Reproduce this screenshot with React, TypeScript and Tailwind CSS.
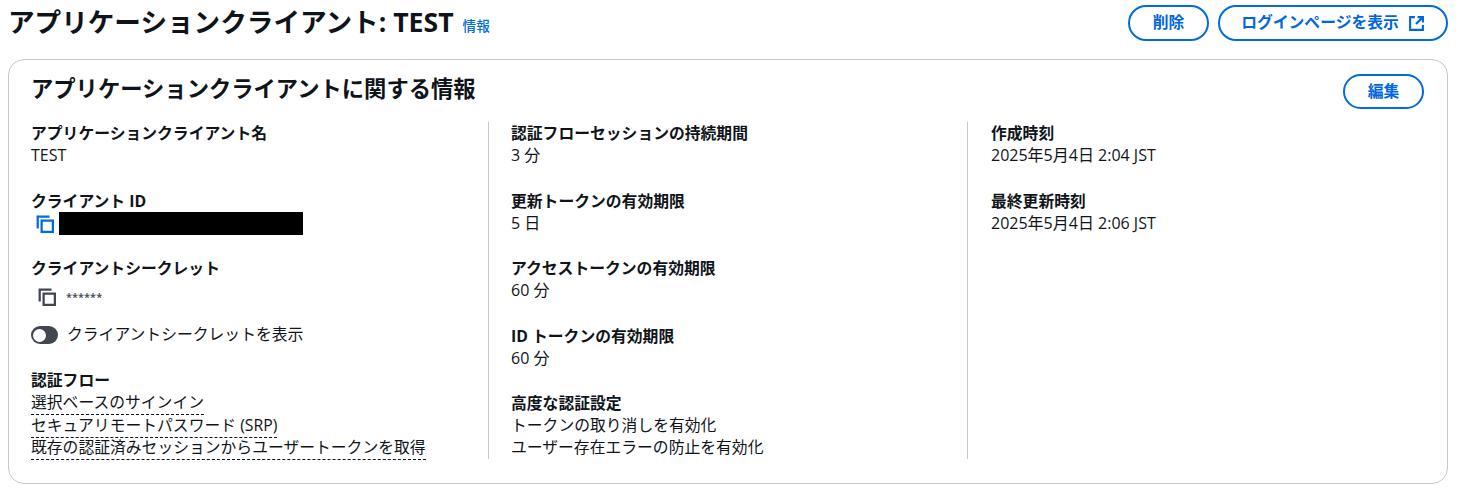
import type { ReactNode } from "react";

const FONT = "font-['Open_Sans','Noto_Sans_CJK_JP',sans-serif]";

const CopyIcon = ({ className }: { className: string }) => (
  <svg viewBox="0 0 16 16" fill="none" stroke="currentColor" strokeWidth="2" className={className}>
    <path d="M1.5 11V1.5H11" strokeLinecap="square" />
    <rect x="5" y="5" width="10" height="10" />
  </svg>
);

const ExternalIcon = () => (
  <svg viewBox="0 0 16 16" fill="none" stroke="currentColor" strokeWidth="2" className="w-[17px] h-[17px] ml-[9px]">
    <path d="M6.5 2H2v12h12V9.5" />
    <path d="M9 2h5v5M14 2 7.5 8.5" />
  </svg>
);

const Btn = ({ children, className = "" }: { children: ReactNode; className?: string }) => (
  <button className={`rounded-full border-2 border-[#006ce0] text-[#0066dd] text-[15.8px] font-bold flex items-center justify-center bg-white ${className}`}>
    {children}
  </button>
);

const Field = ({ label, children }: { label: string; children: ReactNode }) => (
  <div className="mb-[23.5px]">
    <div className="font-bold text-[15.8px] leading-[22px] h-[22px]">{label}</div>
    <div className="text-[16px] leading-[22px]">{children}</div>
  </div>
);

const Dashed = ({ children }: { children: ReactNode }) => (
  <div className="leading-[22.5px] h-[22.5px]">
    <span className="border-b border-dashed border-[#0f141a] pb-[1px]">{children}</span>
  </div>
);

export default function App() {
  return (
    <div className={`${FONT} bg-white text-[#0f141a] w-[1480px] h-[496px] overflow-hidden pl-2 pr-8 pt-[5px]`}>
      <div className="flex items-center justify-between h-[36px]">
        <div className="flex items-baseline">
          <h1 className="text-[26.6px] font-bold leading-[36px] mt-[-3px]">アプリケーションクライアント: TEST</h1>
          <a className="text-[13.6px] font-medium text-[#006ce0] ml-[9px] relative top-[-1px]">情報</a>
        </div>
        <div className="flex gap-[9px]">
          <Btn className="w-[81px] h-[36px]">削除</Btn>
          <Btn className="w-[230px] h-[36px]">
            ログインページを表示
            <ExternalIcon />
          </Btn>
        </div>
      </div>

      <section className="mt-[18px] h-[425px] rounded-[16px] border border-[#c6c6cd] pl-[22px] pr-[23px] pt-[14px]">
        <div className="flex items-start justify-between h-[36px]">
          <h2 className="text-[22.3px] font-bold leading-[30px]">アプリケーションクライアントに関する情報</h2>
          <Btn className="w-[81px] h-[35px]">編集</Btn>
        </div>

        <div className="grid grid-cols-[480px_480px_1fr] mt-[12px] h-[337px]">
          <div className="border-r border-[#c6c6cd] mr-[22px]">
            <Field label="アプリケーションクライアント名">TEST</Field>
            <Field label="クライアント ID">
              <div className="flex items-center h-[24px]">
                <CopyIcon className="w-[18px] h-[18px] ml-[5px] text-[#006ce0]" />
                <div className="ml-[5px] w-[244px] h-[23px] bg-black" />
              </div>
            </Field>
            <div className="mt-[-2px]">
              <div className="font-bold text-[15.8px] leading-[22px]">クライアントシークレット</div>
              <div className="flex items-center h-[36px]">
                <CopyIcon className="w-[18px] h-[18px] ml-[7px] text-[#424650]" />
                <span className="ml-[10px] text-[11px] font-semibold text-[#424650]">******</span>
              </div>
              <div className="flex items-center h-[24px] mt-[8px] text-[15.8px]">
                <span className="w-[27px] h-[18px] rounded-full bg-[#424650] relative">
                  <span className="absolute left-[2px] top-[2.5px] w-[13px] h-[13px] rounded-full bg-white" />
                </span>
                <span className="ml-[9px]">クライアントシークレットを表示</span>
              </div>
            </div>
            <div className="text-[15.8px] mt-[22px]">
              <div className="font-bold leading-[22px]">認証フロー</div>
              <Dashed>選択ベースのサインイン</Dashed>
              <Dashed>セキュアリモートパスワード (SRP)</Dashed>
              <Dashed>既存の認証済みセッションからユーザートークンを取得</Dashed>
            </div>
          </div>

          <div className="border-r border-[#c6c6cd] mr-[23px]">
            <Field label="認証フローセッションの持続期間">3 分</Field>
            <Field label="更新トークンの有効期限">5 日</Field>
            <Field label="アクセストークンの有効期限">60 分</Field>
            <Field label="ID トークンの有効期限">60 分</Field>
            <div className="text-[15.8px] leading-[22px]">
              <div className="font-bold">高度な認証設定</div>
              <div>トークンの取り消しを有効化</div>
              <div>ユーザー存在エラーの防止を有効化</div>
            </div>
          </div>

          <div>
            <Field label="作成時刻">2025年5月4日 2:04 JST</Field>
            <Field label="最終更新時刻">2025年5月4日 2:06 JST</Field>
          </div>
        </div>
      </section>
    </div>
  );
}
